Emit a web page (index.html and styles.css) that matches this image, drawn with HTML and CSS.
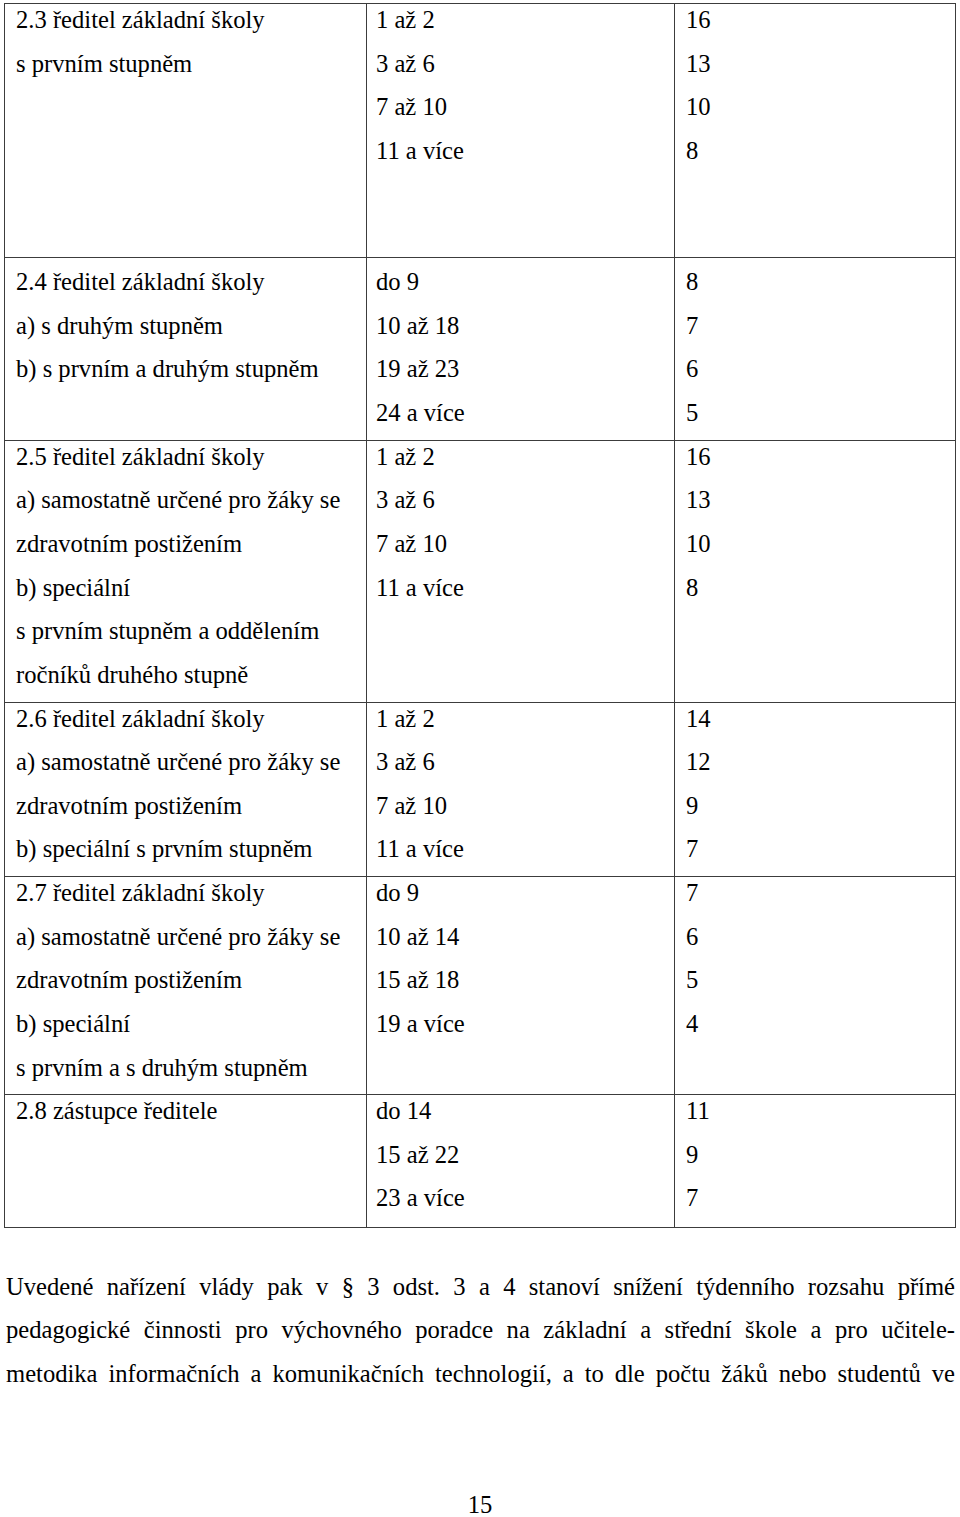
FILE: index.html
```html
<!DOCTYPE html>
<html lang="cs">
<head>
<meta charset="utf-8">
<title>Strana 15</title>
<link rel="stylesheet" href="styles.css">
</head>
<body>
<div class="page">
  <div class="tbl">
    <div class="row row-first">
      <div class="cell c1">
        <div class="ln">2.3 ředitel základní školy</div>
        <div class="ln">s prvním stupněm</div>
      </div>
      <div class="cell c2">
        <div class="ln">1 až 2</div>
        <div class="ln">3 až 6</div>
        <div class="ln">7 až 10</div>
        <div class="ln">11 a více</div>
      </div>
      <div class="cell c3">
        <div class="ln">16</div>
        <div class="ln">13</div>
        <div class="ln">10</div>
        <div class="ln">8</div>
      </div>
    </div>
    <div class="row row-second">
      <div class="cell c1">
        <div class="ln">2.4 ředitel základní školy</div>
        <div class="ln">a) s druhým stupněm</div>
        <div class="ln">b) s prvním a druhým stupněm</div>
      </div>
      <div class="cell c2">
        <div class="ln">do 9</div>
        <div class="ln">10 až 18</div>
        <div class="ln">19 až 23</div>
        <div class="ln">24 a více</div>
      </div>
      <div class="cell c3">
        <div class="ln">8</div>
        <div class="ln">7</div>
        <div class="ln">6</div>
        <div class="ln">5</div>
      </div>
    </div>
    <div class="row">
      <div class="cell c1">
        <div class="ln">2.5 ředitel základní školy</div>
        <div class="ln">a) samostatně určené pro žáky se</div>
        <div class="ln">zdravotním postižením</div>
        <div class="ln">b) speciální</div>
        <div class="ln">s prvním stupněm a oddělením</div>
        <div class="ln">ročníků druhého stupně</div>
      </div>
      <div class="cell c2">
        <div class="ln">1 až 2</div>
        <div class="ln">3 až 6</div>
        <div class="ln">7 až 10</div>
        <div class="ln">11 a více</div>
      </div>
      <div class="cell c3">
        <div class="ln">16</div>
        <div class="ln">13</div>
        <div class="ln">10</div>
        <div class="ln">8</div>
      </div>
    </div>
    <div class="row">
      <div class="cell c1">
        <div class="ln">2.6 ředitel základní školy</div>
        <div class="ln">a) samostatně určené pro žáky se</div>
        <div class="ln">zdravotním postižením</div>
        <div class="ln">b) speciální s prvním stupněm</div>
      </div>
      <div class="cell c2">
        <div class="ln">1 až 2</div>
        <div class="ln">3 až 6</div>
        <div class="ln">7 až 10</div>
        <div class="ln">11 a více</div>
      </div>
      <div class="cell c3">
        <div class="ln">14</div>
        <div class="ln">12</div>
        <div class="ln">9</div>
        <div class="ln">7</div>
      </div>
    </div>
    <div class="row">
      <div class="cell c1">
        <div class="ln">2.7 ředitel základní školy</div>
        <div class="ln">a) samostatně určené pro žáky se</div>
        <div class="ln">zdravotním postižením</div>
        <div class="ln">b) speciální</div>
        <div class="ln">s prvním a s druhým stupněm</div>
      </div>
      <div class="cell c2">
        <div class="ln">do 9</div>
        <div class="ln">10 až 14</div>
        <div class="ln">15 až 18</div>
        <div class="ln">19 a více</div>
      </div>
      <div class="cell c3">
        <div class="ln">7</div>
        <div class="ln">6</div>
        <div class="ln">5</div>
        <div class="ln">4</div>
      </div>
    </div>
    <div class="row row-last">
      <div class="cell c1">
        <div class="ln">2.8 zástupce ředitele</div>
      </div>
      <div class="cell c2">
        <div class="ln">do 14</div>
        <div class="ln">15 až 22</div>
        <div class="ln">23 a více</div>
      </div>
      <div class="cell c3">
        <div class="ln">11</div>
        <div class="ln">9</div>
        <div class="ln">7</div>
      </div>
    </div>
  </div>

  <div class="para">
    <div class="pl">Uvedené nařízení vlády pak v § 3 odst. 3 a 4 stanoví snížení týdenního rozsahu přímé</div>
    <div class="pl">pedagogické činnosti pro výchovného poradce na základní a střední škole a pro učitele-</div>
    <div class="pl">metodika informačních a komunikačních technologií, a to dle počtu žáků nebo studentů ve</div>
  </div>

  <div class="pnum">15</div>
</div>
</body>
</html>
```
FILE: styles.css
```css
html, body {
  margin: 0;
  padding: 0;
  background: #ffffff;
}

body {
  font-family: "Liberation Serif", "Times New Roman", serif;
  font-size: 24.6px;
  color: #000000;
}

.page {
  width: 960px;
  height: 1517px;
  padding-top: 3px;
  box-sizing: border-box;
  overflow: hidden;
}

.tbl {
  margin-left: 4px;
  width: 952px;
  border-top: 1px solid #3c3c3c;
}

.row {
  display: grid;
  grid-template-columns: 362px 308px 282px;
  border-bottom: 1px solid #3c3c3c;
}

.cell {
  border-left: 1px solid #3c3c3c;
  padding: 2px 11px 12.5px 11px;
}

.cell.c2 {
  padding-left: 9px;
}

.cell.c3 {
  padding-left: 11px;
  border-right: 1px solid #3c3c3c;
}

.row-first .cell {
  padding-bottom: 92px;
}

.row-second .cell {
  padding-top: 10px;
  padding-bottom: 13px;
}

.row-mid .cell {
  padding-bottom: 10px;
}

.row-last .cell {
  padding-bottom: 14.5px;
}

.ln {
  height: 28px;
  line-height: 28px;
  white-space: nowrap;
}

.ln + .ln {
  margin-top: 15.65px;
}

.para {
  margin: 45px 5px 0 6px;
}

.pl {
  height: 28px;
  line-height: 28px;
  text-align: justify;
  text-align-last: justify;
  white-space: nowrap;
}

.pl + .pl {
  margin-top: 15.65px;
}

.pnum {
  margin-top: 102.7px;
  height: 28px;
  line-height: 28px;
  text-align: center;
}
```
